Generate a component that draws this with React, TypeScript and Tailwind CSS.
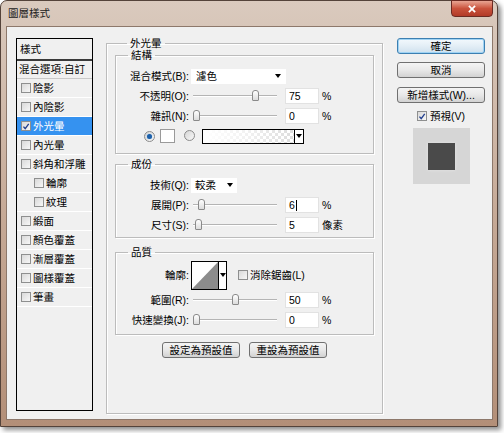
import React from 'react'

const font = "font-['Liberation_Sans','Noto_Sans_CJK_TC',sans-serif]"

function Check({ checked = false, className = '' }: { checked?: boolean; className?: string }) {
  return (
    <span
      className={`inline-flex h-[10px] w-[10px] shrink-0 items-center justify-center border border-[#8e8f8f] bg-linear-to-br from-[#d9d9d9] to-[#f7f7f7] ${className}`}
    >
      {checked && (
        <svg viewBox="0 0 10 10" className="h-[9px] w-[9px]">
          <path d="M1.8 5.2 L4 7.6 L8.4 1.8" fill="none" stroke="#24418f" strokeWidth="1.7" />
        </svg>
      )}
    </span>
  )
}

function Radio({ on = false }: { on?: boolean }) {
  return (
    <span className="inline-flex h-[11px] w-[11px] shrink-0 items-center justify-center rounded-full border border-[#8b8b8b] bg-linear-to-br from-[#d6d6d6] to-[#f8f8f8]">
      {on && <span className="h-[5px] w-[5px] rounded-full bg-[#1d5fa8] shadow-[0_0_1px_#6fb3ec]" />}
    </span>
  )
}

function Arrow() {
  return (
    <svg viewBox="0 0 6 4" className="h-[4px] w-[6px]">
      <polygon points="0,0 6,0 3,4" fill="#000" />
    </svg>
  )
}

function Slider({ value }: { value: number }) {
  return (
    <div className="relative ml-[4px] h-[20px] w-[84px]">
      <div className="absolute left-0 right-0 top-[9px] h-[2px] border-t border-[#b4b4b4] bg-white" />
      <span
        className="absolute top-[4px] h-[11px] w-[7px] rounded-t-[3px] rounded-b-[1px] border border-[#8a8a8a] bg-linear-to-b from-white to-[#dcdcdc]"
        style={{ left: Math.round((value / 100) * 78) }}
      />
    </div>
  )
}

function NumField({ value, unit, cursor = false }: { value: string; unit: string; cursor?: boolean }) {
  return (
    <>
      <div className="ml-[8px] flex h-[16px] w-[34px] items-center border border-[#e2e2e2] bg-white pl-[3px] text-[10.5px] leading-none">
        {value}
        {cursor && <span className="ml-[1px] h-[11px] w-px bg-black" />}
      </div>
      <span className="ml-[3px] text-[10.5px] leading-none">{unit}</span>
    </>
  )
}

function Label({ children }: { children: React.ReactNode }) {
  return <span className="w-[73px] shrink-0 text-right text-[10.5px] leading-none whitespace-nowrap">{children}</span>
}

function Group({ title, className = '', children }: { title: string; className?: string; children: React.ReactNode }) {
  return (
    <fieldset className={`border border-[#bcbcbc] shadow-[inset_1px_1px_0_#fff,1px_1px_0_#fff] ${className}`}>
      <legend className="ml-[12px] px-[3px] text-[10.5px] leading-[12px]">{title}</legend>
      {children}
    </fieldset>
  )
}

const listItems: { name: string; indent?: boolean; checked?: boolean; active?: boolean }[] = [
  { name: '陰影' },
  { name: '內陰影' },
  { name: '外光暈', checked: true, active: true },
  { name: '內光暈' },
  { name: '斜角和浮雕' },
  { name: '輪廓', indent: true },
  { name: '紋理', indent: true },
  { name: '緞面' },
  { name: '顏色覆蓋' },
  { name: '漸層覆蓋' },
  { name: '圖樣覆蓋' },
  { name: '筆畫' },
]

const btn =
  'flex h-[16px] items-center justify-center rounded-[3px] border border-[#707070] bg-linear-to-b from-[#f4f4f4] via-[#e8e8e8] to-[#d2d2d2] text-[10.5px] leading-none'

export default function App() {
  return (
    <div className={`h-[433px] w-[504px] bg-white text-black ${font}`}>
      <div className="flex h-[427px] w-[498px] flex-col rounded-t-[7px] border border-[#54433a] bg-linear-to-b from-[#dacabe] via-[#c6aa97] to-[#b38f78] pr-[4px] pb-[6px] pl-[5px] shadow-[3px_3px_5px_rgba(0,0,0,0.45)]">
        {/* title bar */}
        <div className="flex h-[25px] shrink-0 items-start justify-between">
          <span className="mt-[7px] ml-[2px] text-[10.5px] leading-none text-[#1a1a1a]">圖層樣式</span>
          <div className="-mt-px flex h-[17px] w-[42px] items-center justify-center rounded-b-[4px] border border-[#6b2a22] bg-linear-to-b from-[#e8a493] via-[#c9523c] to-[#b23a28]">
            <svg viewBox="0 0 10 9" className="h-[8px] w-[10px]">
              <path d="M1.5 1 L8.5 8 M8.5 1 L1.5 8" stroke="#fff" strokeWidth="2" />
            </svg>
          </div>
        </div>

        {/* client area */}
        <div className="flex flex-1 items-start border border-[#8d786b] bg-[#f0f0f0] pt-[11px] pl-[9px]">
          {/* style list */}
          <div className="flex h-[373px] w-[77px] shrink-0 flex-col border border-black bg-[#f0f0f0]">
            <div className="flex h-[22px] items-center border-b-2 border-[#3a3a3a] pl-[3px] text-[10.5px] leading-none">樣式</div>
            <div className="flex h-[18px] items-center border-b border-[#c9c9c9] pl-[2px] text-[10.5px] leading-none whitespace-nowrap">
              混合選項:自訂
            </div>
            {listItems.map((it) => (
              <div
                key={it.name}
                className={`flex h-[19px] items-center border-b border-white text-[10.5px] leading-none ${
                  it.active ? 'bg-[#3592f0] text-white' : ''
                } ${it.indent ? 'pl-[17px]' : 'pl-[4px]'}`}
              >
                <Check checked={it.checked} />
                <span className="ml-[2px]">{it.name}</span>
              </div>
            ))}
          </div>

          {/* main group */}
          <Group title="外光暈" className="-mt-[1px] ml-[13px] h-[377px] w-[277px] shrink-0 px-[8px]">
            <Group title="結構" className="pt-[5px] pb-[7px]">
              <div className="flex h-[20px] items-center">
                <Label>混合模式(B):</Label>
                <div className="ml-[2px] flex h-[15px] w-[95px] items-center justify-between bg-white pr-[5px] pl-[5px] text-[10.5px] leading-none">
                  濾色
                  <Arrow />
                </div>
              </div>
              <div className="flex h-[20px] items-center">
                <Label>不透明(O):</Label>
                <Slider value={75} />
                <NumField value="75" unit="%" />
              </div>
              <div className="flex h-[20px] items-center">
                <Label>雜訊(N):</Label>
                <Slider value={0} />
                <NumField value="0" unit="%" />
              </div>
              <div className="flex h-[20px] items-center pl-[28px]">
                <Radio on />
                <span className="ml-[5px] h-[14px] w-[15px] border border-[#9a9a9a] bg-white" />
                <span className="ml-[9px]">
                  <Radio />
                </span>
                <div className="ml-[7px] flex h-[15px] w-[102px] border border-black">
                  <div className="flex-1 bg-[conic-gradient(#dcdcdc_25%,#fff_0_50%,#dcdcdc_0_75%,#fff_0)] bg-[length:6px_6px]">
                    <div className="h-full w-full bg-linear-to-r from-white via-white/60 to-transparent" />
                  </div>
                  <div className="flex w-[9px] items-center justify-center border-l border-black bg-white">
                    <Arrow />
                  </div>
                </div>
              </div>
            </Group>

            <Group title="成份" className="mt-[4px] pt-[5px] pb-[2px]">
              <div className="flex h-[20px] items-center">
                <Label>技術(Q):</Label>
                <div className="ml-[2px] flex h-[15px] w-[46px] items-center justify-between bg-white pr-[4px] pl-[4px] text-[10.5px] leading-none">
                  較柔
                  <Arrow />
                </div>
              </div>
              <div className="flex h-[20px] items-center">
                <Label>展開(P):</Label>
                <Slider value={6} />
                <NumField value="6" unit="%" cursor />
              </div>
              <div className="flex h-[20px] items-center">
                <Label>尺寸(S):</Label>
                <Slider value={2} />
                <NumField value="5" unit="像素" />
              </div>
            </Group>

            <Group title="品質" className="mt-[8px] pt-[2px] pb-[4px]">
              <div className="flex h-[30px] items-center">
                <Label>輪廓:</Label>
                <div className="ml-[2px] flex h-[29px] w-[36px] border border-black bg-white">
                  <svg viewBox="0 0 26 27" className="h-full flex-1" preserveAspectRatio="none">
                    <polygon points="0,27 26,0 26,27" fill="#8c8c8c" />
                  </svg>
                  <div className="flex w-[8px] items-center justify-center border-l border-black">
                    <Arrow />
                  </div>
                </div>
                <Check className="ml-[11px]" />
                <span className="ml-[2px] text-[10.5px] leading-none">消除鋸齒(L)</span>
              </div>
              <div className="flex h-[20px] items-center">
                <Label>範圍(R):</Label>
                <Slider value={50} />
                <NumField value="50" unit="%" />
              </div>
              <div className="flex h-[20px] items-center">
                <Label>快速變換(J):</Label>
                <Slider value={0} />
                <NumField value="0" unit="%" />
              </div>
            </Group>

            <div className="mt-[7px] flex justify-center gap-[9px]">
              <button className={`${btn} w-[78px]`}>設定為預設值</button>
              <button className={`${btn} w-[78px]`}>重設為預設值</button>
            </div>
          </Group>

          {/* right column */}
          <div className="ml-[14px] flex w-[88px] shrink-0 flex-col items-center">
            <button className="flex h-[16px] w-[88px] items-center justify-center rounded-[3px] border border-[#3c7fb1] bg-linear-to-b from-[#f3f9fd] via-[#e3eef6] to-[#cfe1ee] text-[10.5px] leading-none shadow-[inset_0_0_0_1px_#9fd3f4]">
              確定
            </button>
            <button className={`${btn} mt-[8px] w-[88px]`}>取消</button>
            <button className={`${btn} mt-[9px] w-[88px]`}>新增樣式(W)...</button>
            <div className="mt-[6px] flex h-[14px] items-center">
              <Check checked />
              <span className="ml-[3px] text-[10.5px] leading-none">預視(V)</span>
            </div>
            <div className="mt-[5px] flex h-[56px] w-[57px] items-center justify-center bg-[#d6d6d6]">
              <div className="h-[27px] w-[27px] bg-[#4a4a4a] shadow-[0_0_3px_#e8e8e8]" />
            </div>
          </div>
        </div>
      </div>
    </div>
  )
}
